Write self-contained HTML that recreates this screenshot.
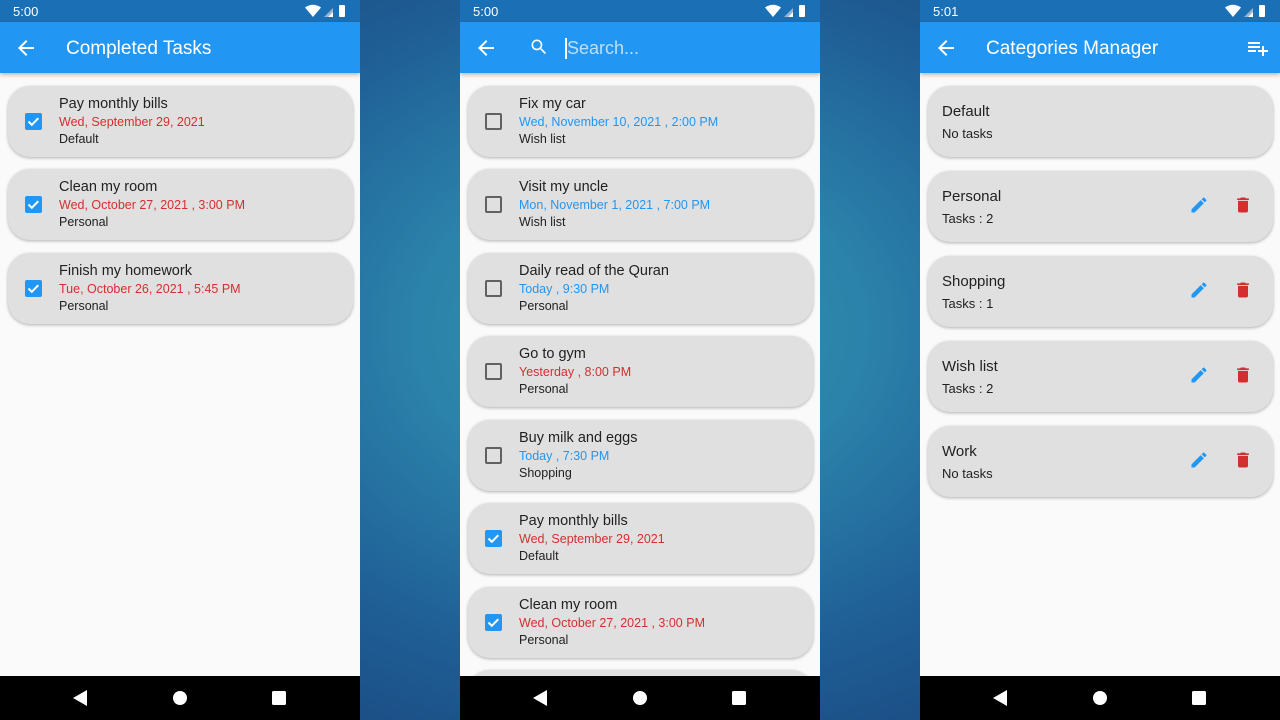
<!DOCTYPE html>
<html><head><meta charset="utf-8"><style>
*{margin:0;padding:0;box-sizing:border-box}
body{width:1280px;height:720px;overflow:hidden;position:relative;font-family:"Liberation Sans",Roboto,sans-serif;background:radial-gradient(ellipse 640px 480px at 640px 330px,#3194ae 0%,#2b82aa 35%,#1f5f96 70%,#1a4a80 100%)}
.ph{position:absolute;top:0;width:360px;height:720px;background:#fafafa;overflow:hidden}
.sb{position:absolute;top:0;left:0;width:360px;height:22px;background:#1a6fb5;color:#fff;font-size:13px}
.sb .t{position:absolute;left:13px;top:4px}
.ab{position:absolute;top:22px;left:0;width:360px;height:51px;background:#2196f3;box-shadow:0 2px 4px rgba(0,0,0,.25);color:#fff;z-index:2}
.ab .ti{position:absolute;left:66px;top:16px;font-size:19px}
.nav{position:absolute;bottom:0;left:0;width:360px;height:44px;background:#000;z-index:3}
.card{position:absolute;left:8px;width:345px;height:71px;background:#e0e0e0;border-radius:22px;box-shadow:0 1px 3px rgba(0,0,0,.3)}
.card .a{position:absolute;left:51px;top:10px;font-size:14.5px;color:#212121}
.card .b{position:absolute;left:51px;top:29px;font-size:12.5px}
.card .c{position:absolute;left:51px;top:46px;font-size:12.5px;color:#212121}
.red{color:#d32f2f}.blu{color:#2196f3}
.cb{position:absolute;left:17px;top:27px;width:17px;height:17px;border-radius:2px}
.cb.on{background:#2196f3}
.cb.off{border:2px solid #616161}
.cat .a{left:14px;top:17px;font-size:15px}
.cat .c{left:14px;top:40px;font-size:13px}
.ic{position:absolute;top:24px}
</style></head><body>
<svg width="0" height="0" style="position:absolute"><defs>
<symbol id="chk" viewBox="0 0 17 17"><path d="M3.5 8.5l3.3 3.3 6.5-6.6" stroke="#fff" stroke-width="2" fill="none"/></symbol>
<symbol id="back" viewBox="0 0 24 24"><path d="M20 11H7.83l5.59-5.59L12 4l-8 8 8 8 1.41-1.41L7.83 13H20v-2z" fill="#fff"/></symbol>
<symbol id="stat" viewBox="0 0 50 14"><path d="M0 3.5Q8-2 16 3.5L8 13z" fill="#fff"/><path d="M19 13L28 4v9z" fill="#fff" opacity=".5"/><path d="M23 13l5-5v5z" fill="#fff"/><rect x="34" y="1" width="6" height="12" rx="1" fill="#fff"/></symbol>
<symbol id="navi" viewBox="0 0 360 44"><polygon points="73,22 87,14 87,30" fill="#fff"/><circle cx="180" cy="22" r="7" fill="#fff"/><rect x="272" y="15" width="14" height="14" rx="1.5" fill="#fff"/></symbol>
<symbol id="pen" viewBox="0 0 24 24"><path d="M3 17.25V21h3.75L17.81 9.94l-3.75-3.75L3 17.25zM20.71 7.04a1 1 0 000-1.41l-2.34-2.34a1 1 0 00-1.41 0l-1.83 1.83 3.75 3.75 1.83-1.83z" fill="#2196f3"/></symbol>
<symbol id="del" viewBox="0 0 24 24"><path d="M6 19c0 1.1.9 2 2 2h8c1.1 0 2-.9 2-2V7H6v12zM19 4h-3.5l-1-1h-5l-1 1H5v2h14V4z" fill="#d32f2f"/></symbol>
</defs></svg>

<div class="ph" style="left:0">
<div class="sb"><span class="t">5:00</span><svg style="position:absolute;left:305px;top:4px" width="50" height="14"><use href="#stat"/></svg></div>
<div class="ab"><svg style="position:absolute;left:14px;top:14px" width="24" height="24"><use href="#back"/></svg><span class="ti">Completed Tasks</span></div>
<div class="card" style="top:86px"><div class="cb on"><svg width="17" height="17"><use href="#chk"/></svg></div><div class="a">Pay monthly bills</div><div class="b red">Wed, September 29, 2021</div><div class="c">Default</div></div>
<div class="card" style="top:169px"><div class="cb on"><svg width="17" height="17"><use href="#chk"/></svg></div><div class="a">Clean my room</div><div class="b red">Wed, October 27, 2021 , 3:00 PM</div><div class="c">Personal</div></div>
<div class="card" style="top:253px"><div class="cb on"><svg width="17" height="17"><use href="#chk"/></svg></div><div class="a">Finish my homework</div><div class="b red">Tue, October 26, 2021 , 5:45 PM</div><div class="c">Personal</div></div>
<div class="nav"><svg width="360" height="44"><use href="#navi"/></svg></div>
</div>

<div class="ph" style="left:460px">
<div class="sb"><span class="t">5:00</span><svg style="position:absolute;left:305px;top:4px" width="50" height="14"><use href="#stat"/></svg></div>
<div class="ab"><svg style="position:absolute;left:14px;top:14px" width="24" height="24"><use href="#back"/></svg>
<svg style="position:absolute;left:69px;top:15px" width="20" height="20" viewBox="0 0 24 24"><path d="M15.5 14h-.79l-.28-.27A6.470 6.470 0 0016 9.5 6.5 6.5 0 109.5 16c1.61 0 3.09-.59 4.230-1.57l.27.28v.79l5 4.99L20.49 19l-4.99-5zm-6 0C7.01 14 5 11.99 5 9.5S7.01 5 9.5 5 14 7.01 14 9.5 11.99 14 9.5 14z" fill="#fff"/></svg>
<div style="position:absolute;left:105px;top:16px;width:1.5px;height:21px;background:#fff"></div>
<span style="position:absolute;left:107px;top:16px;font-size:18px;color:rgba(255,255,255,.7)">Search...</span></div>
<div class="card" style="top:86px"><div class="cb off"></div><div class="a">Fix my car</div><div class="b blu">Wed, November 10, 2021 , 2:00 PM</div><div class="c">Wish list</div></div>
<div class="card" style="top:169px"><div class="cb off"></div><div class="a">Visit my uncle</div><div class="b blu">Mon, November 1, 2021 , 7:00 PM</div><div class="c">Wish list</div></div>
<div class="card" style="top:253px"><div class="cb off"></div><div class="a">Daily read of the Quran</div><div class="b blu">Today , 9:30 PM</div><div class="c">Personal</div></div>
<div class="card" style="top:336px"><div class="cb off"></div><div class="a">Go to gym</div><div class="b red">Yesterday , 8:00 PM</div><div class="c">Personal</div></div>
<div class="card" style="top:420px"><div class="cb off"></div><div class="a">Buy milk and eggs</div><div class="b blu">Today , 7:30 PM</div><div class="c">Shopping</div></div>
<div class="card" style="top:503px"><div class="cb on"><svg width="17" height="17"><use href="#chk"/></svg></div><div class="a">Pay monthly bills</div><div class="b red">Wed, September 29, 2021</div><div class="c">Default</div></div>
<div class="card" style="top:587px"><div class="cb on"><svg width="17" height="17"><use href="#chk"/></svg></div><div class="a">Clean my room</div><div class="b red">Wed, October 27, 2021 , 3:00 PM</div><div class="c">Personal</div></div>
<div class="card" style="top:670px"></div>
<div class="nav"><svg width="360" height="44"><use href="#navi"/></svg></div>
</div>

<div class="ph" style="left:920px">
<div class="sb"><span class="t">5:01</span><svg style="position:absolute;left:305px;top:4px" width="50" height="14"><use href="#stat"/></svg></div>
<div class="ab"><svg style="position:absolute;left:14px;top:14px" width="24" height="24"><use href="#back"/></svg><span class="ti">Categories Manager</span>
<svg style="position:absolute;left:326px;top:14px" width="24" height="24" viewBox="0 0 24 24"><path d="M2 6h12v2H2zM2 10h12v2H2zM2 14h8v2H2zM16 14v-4h2v4h4v2h-4v4h-2v-4h-4v-2z" fill="#fff"/></svg></div>
<div class="card cat" style="top:86px"><div class="a">Default</div><div class="c">No tasks</div></div>
<div class="card cat" style="top:171px"><div class="a">Personal</div><div class="c">Tasks : 2</div><svg class="ic" style="left:261px" width="20" height="20"><use href="#pen"/></svg><svg class="ic" style="left:305px" width="20" height="20"><use href="#del"/></svg></div>
<div class="card cat" style="top:256px"><div class="a">Shopping</div><div class="c">Tasks : 1</div><svg class="ic" style="left:261px" width="20" height="20"><use href="#pen"/></svg><svg class="ic" style="left:305px" width="20" height="20"><use href="#del"/></svg></div>
<div class="card cat" style="top:341px"><div class="a">Wish list</div><div class="c">Tasks : 2</div><svg class="ic" style="left:261px" width="20" height="20"><use href="#pen"/></svg><svg class="ic" style="left:305px" width="20" height="20"><use href="#del"/></svg></div>
<div class="card cat" style="top:426px"><div class="a">Work</div><div class="c">No tasks</div><svg class="ic" style="left:261px" width="20" height="20"><use href="#pen"/></svg><svg class="ic" style="left:305px" width="20" height="20"><use href="#del"/></svg></div>
<div class="nav"><svg width="360" height="44"><use href="#navi"/></svg></div>
</div>
</body></html>
